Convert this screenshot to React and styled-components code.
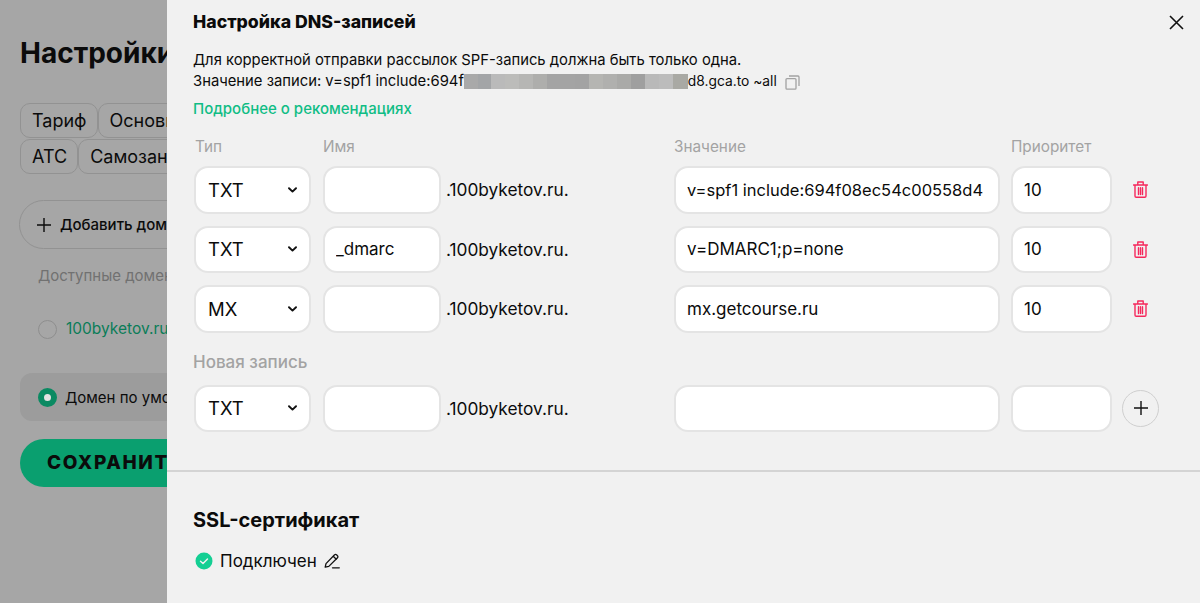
import React from "react";
import styled, { createGlobalStyle } from "styled-components";

const Global = createGlobalStyle`
  html, body { margin: 0; padding: 0; height: 100%; }
  body { font-family: Inter, "Noto Sans", "Liberation Sans", sans-serif; color: #0b0b0b; }
  * { box-sizing: border-box; }
`;

const Screen = styled.div`
  display: flex;
  width: 1200px;
  height: 603px;
  overflow: hidden;
  background: #a6a6a6;
`;

const Page = styled.div`
  flex: none;
  width: 167px;
  height: 603px;
  padding: 36px 0 0 20px;
  overflow: hidden;
`;
const PageTitle = styled.h1`
  margin: 0 0 33px;
  font-size: 28px;
  line-height: 34px;
  font-weight: 700;
  white-space: nowrap;
`;
const Tabs = styled.div`
  display: flex;
  flex-wrap: wrap;
  gap: 1px 0;
  width: 240px;
  margin-bottom: 26px;
`;
const Tab = styled.div`
  height: 35px;
  padding: 0 10px 0 11px;
  border: 1px solid #929292;
  border-radius: 10px;
  font-size: 18px;
  line-height: 33px;
  white-space: nowrap;
`;
const AddDomain = styled.div`
  display: flex;
  align-items: center;
  gap: 9px;
  width: 260px;
  height: 49px;
  margin-left: -1px;
  padding-left: 17px;
  border: 1px solid #929292;
  border-radius: 25px;
  font-size: 15px;
  font-weight: 500;
  white-space: nowrap;
`;
const Muted = styled.div`
  margin: 18px 0 0 18px;
  font-size: 15px;
  line-height: 18px;
  color: #717171;
  white-space: nowrap;
`;
const RadioRow = styled.div`
  display: flex;
  align-items: center;
  gap: 9px;
  margin: 34px 0 0 18px;
  font-size: 15.5px;
  line-height: 20px;
  color: #0a7d58;
  white-space: nowrap;
`;
const Radio = styled.span`
  width: 19px;
  height: 19px;
  flex: none;
  border-radius: 50%;
  border: ${(p) => (p.$on ? "6px solid #0a8a62" : "1px solid #8e8e8e")};
  background: ${(p) => (p.$on ? "#e2e2e2" : "transparent")};
`;
const DefaultBox = styled.div`
  display: flex;
  align-items: center;
  gap: 8px;
  width: 300px;
  height: 48px;
  margin-top: 34px;
  padding-left: 18px;
  border-radius: 12px;
  background: #9c9c9c;
  font-size: 15px;
  white-space: nowrap;
`;
const SaveButton = styled.div`
  width: 300px;
  height: 48px;
  margin-top: 18px;
  padding-left: 27px;
  border-radius: 24px;
  background: #0a9f6f;
  font-size: 19px;
  line-height: 48px;
  font-weight: 800;
  letter-spacing: 1.6px;
  white-space: nowrap;
`;

const Drawer = styled.aside`
  position: relative;
  flex: none;
  width: 1033px;
  height: 603px;
  background: #f1f1f1;
`;
const DnsSection = styled.section`
  height: 472px;
  padding: 10px 0 0 26px;
  border-bottom: 2px solid #d4d4d4;
`;
const CloseButton = styled.button`
  position: absolute;
  top: 15px;
  right: 16px;
  display: flex;
  padding: 0;
  border: 0;
  background: none;
  color: #111;
`;
const DrawerTitle = styled.h2`
  margin: 0;
  font-size: 17.7px;
  line-height: 24px;
  font-weight: 800;
`;
const SectionTitle = styled.h2`
  margin: 0;
  font-size: 20px;
  line-height: 24px;
  font-weight: 700;
`;
const Note = styled.p`
  margin: 16px 0 0;
  font-size: 14.8px;
  line-height: 21px;
  white-space: nowrap;
`;
const Mosaic = styled.span`
  display: inline-flex;
  vertical-align: -3px;
  height: 15px;
`;
const Tile = styled.span`
  width: ${(p) => p.$w}px;
  background: ${(p) => p.$c};
`;
const NoteTail = styled.span`
  font-size: 13.8px;
`;
const CopyIcon = styled.svg`
  display: inline-block;
  vertical-align: -4px;
  margin-left: 8px;
`;
const MoreLink = styled.a`
  display: block;
  margin-top: 7px;
  font-size: 15px;
  line-height: 20px;
  font-weight: 500;
  color: #10bd85;
`;
const Row = styled.div`
  display: flex;
  align-items: center;
  height: 47.5px;
  margin-bottom: 12px;
`;
const Labels = styled.div`
  display: flex;
  margin: 18px 0 9px;
  font-size: 15.3px;
  line-height: 20px;
  color: #a3a3a3;
`;
const Label = styled.span`
  flex: none;
  width: ${(p) => p.$w}px;
  padding-left: 2px;
`;
const SelectBox = styled.div`
  flex: none;
  display: flex;
  align-items: center;
  justify-content: space-between;
  width: 117px;
  height: 47.5px;
  margin: 0 12px 0 1px;
  padding: 0 12px 0 12px;
  border: 2px solid #e4e4e4;
  border-radius: 14px;
  background: #fff;
  font-size: 18.5px;
`;
const Field = styled.input`
  flex: none;
  width: ${(p) => p.$w}px;
  height: 47.5px;
  margin-right: ${(p) => p.$mr || 0}px;
  padding: 0 11px;
  border: 2px solid #e4e4e4;
  border-radius: 14px;
  outline: 0;
  background: #fff;
  font: 400 ${(p) => p.$fs || 17}px Inter, sans-serif;
  color: #0b0b0b;
`;
const Suffix = styled.span`
  flex: none;
  width: 233px;
  padding-left: 5px;
  font-size: 17.3px;
`;
const Trash = styled.button`
  display: flex;
  margin-left: 21px;
  padding: 0;
  border: 0;
  background: none;
  color: #f5285c;
`;
const NewTitle = styled.div`
  margin: 19px 0 13px;
  font-size: 17px;
  line-height: 20px;
  font-weight: 500;
  color: #a3a3a3;
`;
const AddCircle = styled.button`
  display: flex;
  align-items: center;
  justify-content: center;
  width: 37px;
  height: 37px;
  margin-left: 10px;
  padding: 0;
  border: 1px solid #cfcfcf;
  border-radius: 50%;
  background: none;
  color: #111;
`;
const SslSection = styled.section`
  padding: 36px 0 0 26px;
`;
const Status = styled.div`
  display: flex;
  align-items: center;
  margin-top: 17px;
  padding-left: 2px;
  font-size: 17px;
  line-height: 24px;
`;
const StatusText = styled.span`
  margin: 0 7px 0 7px;
`;

const tiles = [
  ["#a9a9a9", 14], ["#a3a5a7", 13], ["#bababa", 14], ["#bcbcba", 14], ["#b6b6b4", 14], ["#aeaeac", 14],
  ["#a4a4a4", 14], ["#a4a4a4", 14], ["#a3a3a3", 14], ["#b5b5b2", 14], ["#b0b0ae", 14], ["#aaaaa8", 14],
  ["#9f9f9f", 14], ["#b9b9b9", 14], ["#bcbcbc", 14], ["#a9a9a4", 15],
];

const records = [
  { type: "TXT", name: "", value: "v=spf1 include:694f08ec54c00558d4", fs: 16.5 },
  { type: "TXT", name: "_dmarc", value: "v=DMARC1;p=none" },
  { type: "MX", name: "", value: "mx.getcourse.ru" },
];

const Chevron = () => (
  <svg width="9" height="6" viewBox="0 0 9 6" fill="none" stroke="#111" strokeWidth="1.9" strokeLinecap="round" strokeLinejoin="round">
    <path d="M1 1.2 4.5 4.6 8 1.2" />
  </svg>
);

const TrashIcon = () => (
  <svg width="15" height="17" viewBox="0 0 15 17" fill="none" stroke="currentColor" strokeWidth="1.4" strokeLinecap="round" strokeLinejoin="round">
    <path d="M.6 4h13.8M4.8 4V1h5.4v3M2 4v11c0 .7.5 1.2 1.2 1.2h8.6c.7 0 1.2-.5 1.2-1.2V4M5.5 6.8v6.8M7.5 6.8v6.8M9.5 6.8v6.8" />
  </svg>
);

const Plus = ({ size = 14 }) => (
  <svg width={size} height={size} viewBox="0 0 14 14" fill="none" stroke="currentColor" strokeWidth="1.4">
    <path d="M7 0v14M0 7h14" />
  </svg>
);

const TypeSelect = ({ type }) => (
  <SelectBox>
    {type}
    <Chevron />
  </SelectBox>
);

export default function App() {
  return (
    <Screen>
      <Global />
      <Page>
        <PageTitle>Настройки</PageTitle>
        <Tabs>
          <Tab>Тариф</Tab>
          <Tab>Основные</Tab>
          <Tab>АТС</Tab>
          <Tab>Самозанятые</Tab>
        </Tabs>
        <AddDomain>
          <Plus />
          Добавить домен
        </AddDomain>
        <Muted>Доступные домены</Muted>
        <RadioRow>
          <Radio />
          100byketov.ru
        </RadioRow>
        <DefaultBox>
          <Radio $on />
          Домен по умолчанию
        </DefaultBox>
        <SaveButton>СОХРАНИТЬ</SaveButton>
      </Page>

      <Drawer>
        <DnsSection>
          <CloseButton aria-label="Закрыть">
            <svg width="15" height="15" viewBox="0 0 15 15" fill="none" stroke="currentColor" strokeWidth="1.6">
              <path d="M1 1l13 13M14 1 1 14" />
            </svg>
          </CloseButton>
          <DrawerTitle>Настройка DNS-записей</DrawerTitle>
          <Note>
            Для корректной отправки рассылок SPF-запись должна быть только одна.
            <br />
            Значение записи: v=spf1 include:694f
            <Mosaic>
              {tiles.map(([c, w], i) => (
                <Tile key={i} $c={c} $w={w} />
              ))}
            </Mosaic>
            <NoteTail>d8.gca.to ~all</NoteTail>
            <CopyIcon width="15" height="15" viewBox="0 0 15 15" fill="none" stroke="#a2a2a2" strokeWidth="1.3">
              <rect x="1" y="3.6" width="10" height="10.6" rx="1" />
              <path d="M4 1h9a1 1 0 0 1 1 1v9" />
            </CopyIcon>
          </Note>
          <MoreLink>Подробнее о рекомендациях</MoreLink>
          <Labels>
            <Label $w={128}>Тип</Label>
            <Label $w={351}>Имя</Label>
            <Label $w={337}>Значение</Label>
            <Label $w={120}>Приоритет</Label>
          </Labels>
          {records.map((r, i) => (
            <Row key={i}>
              <TypeSelect type={r.type} />
              <Field $w={118} defaultValue={r.name} readOnly />
              <Suffix>.100byketov.ru.</Suffix>
              <Field $w={326} $mr={11} $fs={r.fs} defaultValue={r.value} readOnly />
              <Field $w={101} defaultValue="10" readOnly />
              <Trash aria-label="Удалить">
                <TrashIcon />
              </Trash>
            </Row>
          ))}
          <NewTitle>Новая запись</NewTitle>
          <Row>
            <TypeSelect type="TXT" />
            <Field $w={118} readOnly />
            <Suffix>.100byketov.ru.</Suffix>
            <Field $w={326} $mr={11} readOnly />
            <Field $w={101} readOnly />
            <AddCircle aria-label="Добавить">
              <Plus />
            </AddCircle>
          </Row>
        </DnsSection>
        <SslSection>
          <SectionTitle>SSL-сертификат</SectionTitle>
          <Status>
            <svg width="18" height="18" viewBox="0 0 18 18">
              <circle cx="9" cy="9" r="8.5" fill="#14cf93" />
              <path d="M5.5 9.2 8 11.6l4.5-4.6" fill="none" stroke="#f1f1f1" strokeWidth="1.4" strokeLinecap="round" strokeLinejoin="round" />
            </svg>
            <StatusText>Подключен</StatusText>
            <svg width="16" height="16" viewBox="0 0 16 16" fill="none" stroke="#111" strokeWidth="1.3" strokeLinejoin="round" strokeLinecap="round">
              <path d="M1.2 14.2 2 10.6 10.6 1.8a1.3 1.3 0 0 1 1.9 0l1 1a1.3 1.3 0 0 1 0 1.9L4.8 13.4l-3.6.8ZM9.2 3.2l3.1 3.1M8.5 14.8h6.8" />
            </svg>
          </Status>
        </SslSection>
      </Drawer>
    </Screen>
  );
}
